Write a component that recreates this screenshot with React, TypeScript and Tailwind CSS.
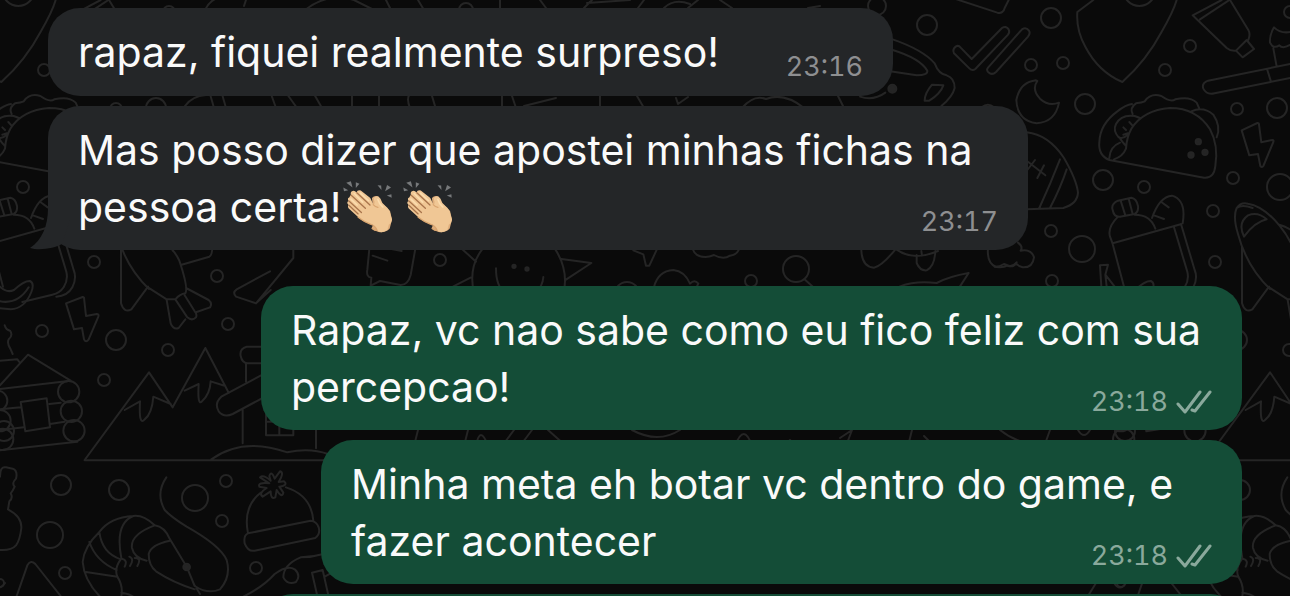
import type { ReactNode } from "react";

const TILE_WIDTH = 1121;

type Dot = [number, number, number];

const rings: Dot[] = [
  [877, 6, 9], [927, 25, 10], [1051, 18, 10], [1031, 65, 6], [1063, 63, 6],
  [1165, 70, 6], [1190, 46, 6], [1290, 12, 6], [1085, 104, 10], [1237, 109, 6],
  [1277, 108, 10], [1103, 180, 10], [1144, 187, 6], [1233, 178, 6], [1280, 187, 13],
  [1213, 211, 6], [1051, 231, 6], [1082, 249, 13], [1052, 281, 6], [94, 262, 6],
  [217, 276, 6], [42, 331, 6], [116, 340, 10], [228, 324, 6], [168, 350, 6],
  [104, 380, 6], [61, 485, 10], [119, 490, 10], [195, 498, 13], [226, 481, 6],
  [50, 535, 13], [65, 573, 6], [222, 521, 6], [256, 568, 6], [0, 583, 4],
  [440, 260, 6], [796, 269, 13], [751, 281, 6],
  [466, 10, 7], [627, 294, 12], [1125, 431, 10],
];

function Doodles() {
  return (
    <>
      {rings.map(([x, y, r]) => (
        <circle key={x + "-" + y} cx={x} cy={y} r={r} strokeWidth="2" />
      ))}

      <g transform="translate(860 0) scale(.33333)">
        <path d="M290 -2 L412 38 Q430 42 434 24 L446 0" />
        <path d="M282 160 Q276 148 288 139 Q296 135 302 143 L335 177 L426 84 Q438 76 446 88 Q450 96 444 104 L346 207 Q337 214 328 205 Z" />
        <path d="M384 203 L486 88 Q498 80 507 92 Q512 100 504 110 L408 216 Q396 227 385 217 Q378 210 384 203 Z" />
        <path d="M700 0 L652 36 Q648 90 676 140 Q715 215 787 246 Q860 180 905 95 Q940 35 950 0" />
        <circle cx="838" cy="-30" r="48" />
        <path d="M1085 0 L998 46 L1100 144 Q1112 154 1128 152 M1110 0 L1165 90 Q1172 102 1165 120 M1020 58 L1105 2 M1128 152 L1160 120 L1182 147 L1148 172 Z" />
        <path d="M1300 94 Q1264 104 1242 82 Q1228 106 1230 128 Q1240 148 1258 136 Q1270 150 1300 128 M1240 145 L1250 200 M1300 190 L1044 242 Q1024 250 1030 266 Q1040 286 1064 280 L1300 232 M1222 210 L1232 242" />
        <path d="M528 241 Q480 246 469 300 Q472 362 530 370 Q586 366 597 308 Q566 320 540 296 Q514 268 532 243 Z" />
        <path d="M98 118 Q190 150 224 190 Q236 222 260 226 Q284 234 284 264 Q278 290 244 318 M98 150 Q180 175 202 212 Q204 226 170 226 L90 214 M194 302 Q194 280 216 254 L250 256 Q242 280 208 302 Z M0 290 Q40 304 76 278" />
        <circle cx="97" cy="266" r="12" fill="#252525" />
        <path d="M365 322 Q384 306 402 322" />
      </g>

      <g transform="translate(1000 100) scale(.33333)">
        <path d="M80 97 Q145 104 192 174 Q230 240 234 278 Q232 312 190 324 L80 328 M180 178 Q152 250 118 324 M200 208 Q182 262 150 324 M82 210 L105 180 M82 184 L136 226 M132 196 L112 234" />
        <path d="M328 180 Q294 166 298 126 Q300 72 352 34 Q378 14 396 12 M328 180 L612 233 Q642 236 646 198 Q656 136 630 88 Q590 24 510 24 Q430 30 394 86 Q380 112 378 146 Q368 170 342 178 M384 104 Q370 118 356 112 Q338 92 348 72 Q364 42 404 48 L420 54 M360 128 Q330 140 328 174 M358 112 Q366 126 378 138 M370 82 L378 90 M388 66 L397 76 M370 104 L384 100 M398 42 Q388 24 408 10 Q426 8 434 4 Q452 -22 484 -12 Q512 8 526 -2 Q570 -12 590 8 L598 26 M574 34 Q610 18 640 44 Q664 80 650 112" />
        <circle cx="595" cy="125" r="8" fill="#252525" />
        <circle cx="573" cy="165" r="8" fill="#252525" />
        <circle cx="615" cy="157" r="8" fill="#252525" />
        <path d="M725 91 L772 69 Q777 68 777 74 L784 127 L817 120 Q822 120 820 126 L790 198 Q786 204 781 198 L774 162 L748 166 Z" />
        <path d="M338 330 Q332 312 354 302 L394 293 Q410 296 414 318 Q416 336 404 342 L360 350 Q342 352 338 330 Z M362 302 L376 346 M386 296 L398 342 M354 350 Q322 382 330 410 Q334 420 338 432 L372 560 M404 344 Q452 344 466 386 M456 354 Q478 290 516 287 Q560 300 548 370 M484 306 L506 322 M462 346 L492 357 M338 430 L542 373 M522 382 L562 515 Q568 540 554 562 Q542 580 520 584 L430 606 M543 372 L584 510 Q594 534 580 562 Q566 588 532 590 M304 560 L300 496 L324 494 L316 524 L344 560 M316 524 L320 560" />
        <path d="M810 567 Q740 500 714 402 Q698 350 710 324 Q722 306 744 311 Q790 318 838 376 Q868 412 882 452 M710 324 Q726 312 758 324 M732 410 Q764 366 800 358 Q774 334 744 346 Q712 368 732 410 Z M838 374 Q880 386 920 430" />
        <path d="M54 428 Q70 440 62 452 Q94 446 102 472 Q98 504 68 502 Q56 500 48 490 Q40 502 28 498 L12 492 Q0 500 -16 500" />
      </g>

      <g transform="translate(0 240) scale(.33333)">
        <path d="M0 140 Q20 160 42 150 Q72 122 90 123 Q104 130 94 156 Q74 206 32 208 L-10 204 M0 184 Q54 194 86 142" />
        <path d="M198 190 L248 171 L252 173 L258 228 L290 222 Q298 222 295 230 L266 298 Q258 310 252 298 L246 264 L222 268 Z" />
        <path d="M363 20 L363 190 Q372 220 394 208 L444 140 M444 142 L500 178 L526 178 Q540 162 556 160 Q566 146 538 62 Q530 44 516 28 M545 74 L628 50 Q640 44 636 0 M500 180 L512 250 Q520 270 536 264 L556 238 M558 144 L626 180 Q638 190 630 202 L590 216 M526 178 L562 232 Q576 244 588 232 Q592 222 584 214 L554 166" />
        <path d="M810 94 L710 148 Q696 158 708 170 L768 190 L812 150 M768 190 L880 54 L880 30" />
        <path d="M14 256 Q18 270 30 272 Q40 286 26 298 Q20 310 32 328 L38 342 M0 362 L52 358 L58 366 M0 436 L84 344 L212 422 L0 447 M0 508 L62 502 M62 486 L140 475 L150 562 L76 574 Z M148 492 L182 488 M150 552 L194 545" />
        <circle cx="206" cy="455" r="32" />
        <circle cx="214" cy="514" r="32" />
        <circle cx="222" cy="572" r="32" />
        <circle cx="-8" cy="482" r="30" />
        <circle cx="0" cy="542" r="32" />
        <circle cx="8" cy="598" r="32" />
        <path d="M-12 632 L232 605 M0 570 L72 562" />
        <path d="M254 660 L447 397 L518 502 L616 324 L686 458 M374 510 L420 484 Q416 560 434 538 Q456 522 460 470 L512 492 M554 452 L596 432 Q592 500 606 484 Q630 462 632 424 L676 438" />
        <path d="M800 320 L740 320 Q718 326 722 348 Q726 368 742 370 L800 370 M738 370 L738 425 M810 392 L664 470 Q642 490 656 514 Q672 534 698 522 L810 462 M728 510 L728 610 M798 520 L798 586 L880 586 L880 500 M838 520 L838 584 M798 545 L880 545 M948 560 L948 625" />
        <path d="M254 661 L990 661 M634 658 Q728 590 862 637 Q928 622 984 642" />
      </g>

      <g transform="translate(0 400) scale(.33333)">
        <path d="M0 230 Q0 198 18 202 L38 206 Q54 212 48 236 Q34 250 44 260 Q38 274 32 280 Q40 294 28 304 L24 328 Q66 350 64 384 Q60 420 48 436 Q34 452 0 450" />
        <path d="M50 588 L82 496 Q92 478 106 492 L182 588" />
        <path d="M499 232 Q466 280 494 330 Q512 350 560 380 Q660 436 680 480 Q694 530 660 568 Q624 584 584 558 L560 500 L510 418 Q494 380 464 376 Q430 344 400 348 Q330 352 298 396 Q252 440 248 486 Q252 540 300 590 M298 396 Q306 460 362 478 M268 426 Q288 484 350 510 M258 516 L352 530 M400 348 Q344 370 364 474 M464 376 Q390 404 396 444 Q402 474 440 482 M510 422 Q452 434 446 462 Q446 496 468 514 Q520 548 584 568 M362 478 Q342 506 352 530 Q370 558 364 588 M366 476 Q384 480 374 500 M388 470 Q404 476 390 498 M404 474 Q426 474 412 498 M364 578 Q390 582 400 590 M584 556 L600 582" />
        <circle cx="560" cy="501" r="10" fill="#252525" />
        <path d="M744 400 Q728 320 782 278 M858 262 Q934 286 940 362 M744 400 L932 362 Q950 364 956 382 Q962 402 946 414 L764 452 Q744 456 734 430 Q730 406 744 400 Z" />
        <path d="M808 250 Q772 246 778 260 L800 264 Q774 280 788 290 L812 274 Q812 300 826 292 L830 270 Q846 296 850 278 L838 260 Q866 256 852 244 L836 246 Q854 218 840 214 L824 236 Q814 210 808 228 L812 242 Q790 222 780 232 Z" />
        <path d="M730 590 Q790 560 824 522 Q862 494 884 508 Q904 526 888 546 Q862 556 850 532 Q850 494 902 472 Q936 472 970 462 M936 518 L968 510 L986 590 M936 518 L952 588 M974 530 L992 520" />
      </g>

      <g transform="translate(380 235) scale(.33333)">
        <path d="M0 35 L65 48 M-22 62 L22 77 M108 30 L92 120 Q84 150 62 150 L0 138 L-28 152 L-26 128 Q-42 126 -38 104 L-30 20" />
        <path d="M284 185 Q262 100 306 44 M524 40 Q570 110 548 185 M246 42 L288 80 M220 154 L272 128 M544 72 L634 84 L558 134 M348 100 Q348 156 376 174 M490 126 Q488 154 468 170" />
        <circle cx="402" cy="94" r="5" fill="#252525" />
        <circle cx="441" cy="102" r="5" fill="#252525" />
        <path d="M760 46 L790 58 L798 92 L808 92 L832 40 M938 42 Q946 66 976 66 Q988 66 1002 60 Q1030 76 1050 62 Q1072 60 1078 40 M822 156 Q834 108 880 105 Q914 108 930 146 Q944 132 955 146 L950 156" />
      </g>

      <g transform="translate(780 235) scale(.33333)">
        <path d="M75 134 L102 158 M244 46 Q246 96 282 98 Q304 94 344 46 M350 44 Q400 80 474 48 M410 60 L410 84 Q420 108 440 106 Q464 94 466 48 M424 48 L426 62 M360 154 Q408 136 470 144 Q508 124 566 114 L540 154" />
        <path d="M624 40 Q620 84 648 96 Q672 98 680 92 Q696 98 710 82" />
      </g>

      <path strokeWidth="2" d="M185 106 Q192 96 206 95 M210 94 L214 108 M222 94 L226 108 M271 94 L276 108 M287 94 L297 108 M314 94 L322 108 M352 94 V108 M379 108 V94 M410 108 Q406 98 410 94 M435 106 L432 96 M502 96 V108 M512 96 L516 108 M524 106 L556 98 M600 96 V108 M637 96 L644 108 M676 98 L678 104 L688 97 M742 108 Q754 94 766 99 Q784 92 804 108 M838 96 L844 108" />
      <path strokeWidth="2" d="M205 10 Q210 0 218 -2 M246 0 L244 6 M305 10 Q328 -8 354 0 L374 10 M386 0 L391 10 M418 0 L424 10 M500 0 V8 M540 0 L546 8 M584 8 L592 0 M587 3 L630 0 M638 8 L644 0 M664 8 Q674 -2 690 4 M688 8 L698 0 M720 0 L732 8 M808 8 L820 6" />
      <path strokeWidth="2" d="M414 446 L418 430 M464 446 L468 430 M476 446 Q480 424 488 446 M502 446 L514 430 M520 446 L532 430 M548 430 L566 446 M632 430 Q658 444 680 430 M735 446 Q744 422 752 446 M784 446 L790 440 L796 446 M840 438 L852 430 L846 446 M908 446 L912 430 M924 436 L934 446 M1000 430 Q1020 446 1045 444 L1050 430 M1078 430 Q1084 440 1090 430 M1088 596 L1096 583 M1114 583 Q1120 592 1126 583" />
    </>
  );
}

function Wallpaper() {
  return (
    <svg
      aria-hidden="true"
      className="absolute top-0 left-0 h-full w-full fill-none stroke-[#252525] stroke-[6px]"
      strokeLinecap="round"
      strokeLinejoin="round"
    >
      {[-TILE_WIDTH, 0, TILE_WIDTH].map((x) => (
        <g key={x} transform={`translate(${x} 0)`}>
          <Doodles />
        </g>
      ))}
    </svg>
  );
}

function Clap() {
  return (
    <svg role="img" aria-label="👏🏼" viewBox="42 28 158 162" className="mr-2 -mt-2 inline-block h-[54px] w-[52px] align-middle">
      <g fill="#77797b">
        <path d="M55 35 L69 31 L74 50 Z" />
        <path d="M84 34 L95 38 L84 51 Z" />
        <path d="M46 50 L61 58 L48 61 Z" />
        <path d="M150 43 L161 44 L162 57 Z" />
        <path d="M179 42 L191 50 L173 61 Z" />
        <path d="M178 74 L192 70 L193 81 Z" />
      </g>
      <path fill="#dfae7c" d="M133 82 Q140 73 153 77 L162 96 L188 121 L194 147 L187 174 Q174 188 154 185 L132 176 Q132 166 142 164 Z" />
      <path
        fill="#f0c795"
        d="M69 72 Q66 62 77 60 Q82 60 86 65 Q89 56 99 59 L128 82 L137 101 Q141 102 141 93 Q135 80 145 77 Q153 74 159 84 Q162 97 174 106 Q187 116 189 131 L194 148 Q193 158 184 163 L180 179 Q164 190 149 182 Q144 166 128 161 Q101 152 90 139 L65 116 Q57 109 62 103 Q54 95 62 91 Q57 82 64 80 Z"
      />
      <path
        fill="none"
        stroke="#a9754c"
        strokeWidth="4"
        strokeLinecap="round"
        d="M87 66 L127 103 M70 73 L113 113 M63 91 L101 126 M63 104 L91 130"
      />
      <path fill="none" stroke="#d9a570" strokeWidth="4" strokeLinecap="round" d="M137 102 Q143 109 151 110 M91 140 Q108 153 128 161 Q143 165 149 181 M149 181 Q140 181 134 174" />
      <path fill="none" stroke="#fbdcae" strokeWidth="5" strokeLinecap="round" d="M98 67 L123 90 M79 68 L105 94 M69 85 L88 103 M151 86 Q154 99 166 109" />
    </svg>
  );
}

function DoubleCheck() {
  return (
    <svg
      role="img"
      aria-label="Entregue"
      viewBox="0 0 36 24"
      className="h-6 w-9 fill-none stroke-[#8aa99c] stroke-[3px]"
      strokeLinecap="round"
      strokeLinejoin="round"
    >
      <path d="M2 14 L9 22 L24 2 M16 20 L19 21 L34 2" />
    </svg>
  );
}

function Tail() {
  return (
    <svg aria-hidden="true" viewBox="0 0 52 50" className="absolute bottom-0 -left-[18px] h-[50px] w-[52px] fill-[#242628]">
      <path d="M18 0 V8 C18 26 12 40 0 48 C10 51 25 48 32 44 L40 20 V0 Z" />
    </svg>
  );
}

interface BubbleProps {
  time: string;
  sent?: boolean;
  tail?: boolean;
  width: string;
  children?: ReactNode;
}

function Bubble({ time, sent, tail, width, children }: BubbleProps) {
  return (
    <li
      className={`relative min-h-[88px] w-full rounded-[32px] px-[30px] pt-4 pb-[14px] ${width} ${
        sent ? "self-end bg-[#144d37]" : "self-start bg-[#242628]"
      }`}
    >
      {tail && <Tail />}
      <div className="relative text-[41px] leading-[57px] text-[#fafafa]">
        {children}
        <span
          className={`float-right mt-[25px] -mb-1 flex items-center gap-2 text-[27px] leading-9 tabular-nums [font-optical-sizing:none] ${
            sent ? "text-[#8aa99c]" : "text-[#8e8f91]"
          }`}
        >
          <time>{time}</time>
          {sent && <DoubleCheck />}
        </span>
      </div>
    </li>
  );
}

export default function App() {
  return (
    <main className="relative h-screen overflow-hidden bg-[#0a0a0a] font-['Inter','Liberation_Sans',sans-serif]">
      <Wallpaper />
      <div className="relative flex flex-col gap-9 px-12 pt-2">
        <ul className="flex flex-col gap-[10px]">
          <Bubble time="23:16" width="max-w-[845px]">
            rapaz, fiquei realmente surpreso!
          </Bubble>
          <Bubble time="23:17" width="max-w-[980px]" tail>
            Mas posso dizer que apostei minhas fichas na pessoa certa!
            <Clap />
            <Clap />
          </Bubble>
        </ul>
        <ul className="flex flex-col gap-[10px]">
          <Bubble time="23:18" width="max-w-[981px]" sent>
            Rapaz, vc nao sabe como eu fico feliz com sua percepcao!
          </Bubble>
          <Bubble time="23:18" width="max-w-[921px]" sent>
            Minha meta eh botar vc dentro do game, e fazer acontecer
          </Bubble>
          <li className="h-36 w-full max-w-[981px] self-end rounded-[32px] bg-[#144d37]" />
        </ul>
      </div>
    </main>
  );
}
